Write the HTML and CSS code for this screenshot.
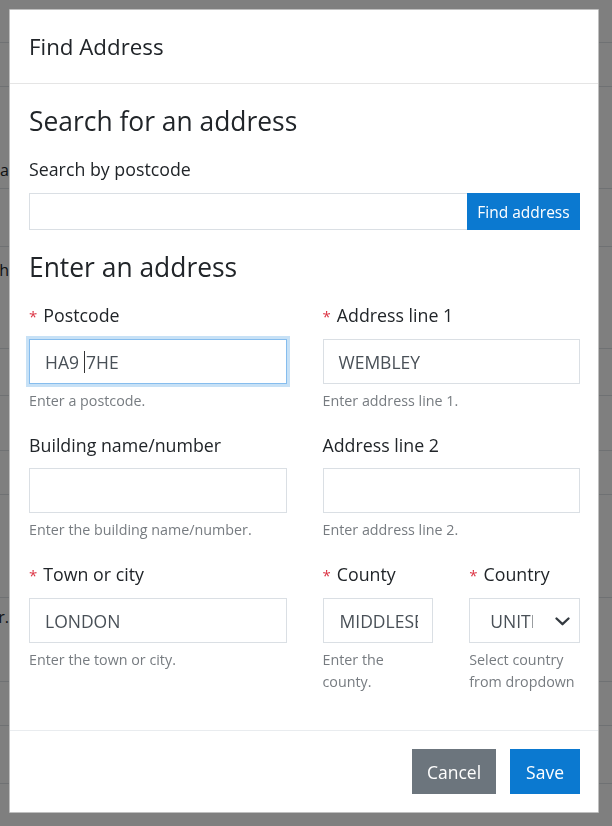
FILE: index.html
```html
<!DOCTYPE html>
<html lang="en">
<head>
<meta charset="utf-8">
<title>Find Address</title>
<link rel="stylesheet" href="styles.css">
</head>
<body>
<div class="page">
  <div class="bg-row r1"><span class="bg-cell"></span></div>
  <div class="bg-row r2"><span class="bg-cell"></span></div>
  <div class="bg-row r3"><span class="bg-cell t3"><span>Surna</span></span></div>
  <div class="bg-row r4"><span class="bg-cell"></span></div>
  <div class="bg-row r5"><span class="bg-cell t5"><span>Month</span></span></div>
  <div class="bg-row r6"><span class="bg-cell"></span></div>
  <div class="bg-row r7"><span class="bg-cell"></span></div>
  <div class="bg-row r8"><span class="bg-cell"></span></div>
  <div class="bg-row r9"><span class="bg-cell"></span></div>
  <div class="bg-row r10"><span class="bg-cell t10"><span>Other.</span></span></div>
  <div class="bg-row r11"><span class="bg-cell"></span></div>
  <div class="bg-row r12"><span class="bg-cell"></span></div>
</div>
<div class="backdrop"></div>
<div class="modal">
  <div class="modal-header">
    <h1 class="modal-title">Find Address</h1>
  </div>
  <div class="modal-body">
    <h2 class="section-title">Search for an address</h2>
    <div class="label search-label">Search by postcode</div>
    <div class="input-group">
      <div class="input input-search"></div>
      <button class="btn btn-primary btn-find" type="button">Find address</button>
    </div>
    <h2 class="section-title second">Enter an address</h2>
    <div class="grid">
      <div class="field span2">
        <div class="label"><span class="req">*</span>Postcode</div>
        <div class="input focused"><span class="value">HA9<span class="caret"></span>7HE</span></div>
        <div class="help">Enter a postcode.</div>
      </div>
      <div class="field span2">
        <div class="label"><span class="req">*</span>Address line 1</div>
        <div class="input"><span class="value">WEMBLEY</span></div>
        <div class="help">Enter address line 1.</div>
      </div>
      <div class="field span2">
        <div class="label">Building name/number</div>
        <div class="input"></div>
        <div class="help">Enter the building name/number.</div>
      </div>
      <div class="field span2">
        <div class="label">Address line 2</div>
        <div class="input"></div>
        <div class="help">Enter address line 2.</div>
      </div>
      <div class="field span2">
        <div class="label"><span class="req">*</span>Town or city</div>
        <div class="input"><span class="value">LONDON</span></div>
        <div class="help">Enter the town or city.</div>
      </div>
      <div class="field">
        <div class="label"><span class="req">*</span>County</div>
        <div class="input input-clip"><span class="clip county-text">MIDDLESEX</span></div>
        <div class="help">Enter the county.</div>
      </div>
      <div class="field">
        <div class="label"><span class="req">*</span>Country</div>
        <div class="input select">
          <span class="clip country-text">UNITED KINGDOM</span>
          <svg class="chevron" width="15" height="9" viewBox="0 0 15 9" aria-hidden="true">
            <polyline points="1.5,1.5 7.5,7.2 13.5,1.5" fill="none" stroke="#343a40" stroke-width="2.3" stroke-linecap="round" stroke-linejoin="round"/>
          </svg>
        </div>
        <div class="help">Select country from dropdown</div>
      </div>
    </div>
  </div>
  <div class="modal-footer">
    <button class="btn btn-secondary" type="button">Cancel</button>
    <button class="btn btn-primary btn-save" type="button">Save</button>
  </div>
</div>
</body>
</html>
```

FILE: styles.css
```css
* {
  box-sizing: border-box;
}

html, body {
  margin: 0;
  padding: 0;
}

body {
  width: 612px;
  height: 826px;
  overflow: hidden;
  background: #ffffff;
  font-family: "Open Sans", "Noto Sans", "Liberation Sans", sans-serif;
  color: #212529;
}

/* background page behind the dialog */
.page {
  display: flex;
  flex-direction: column;
}

.bg-row {
  border-bottom: 1px solid #dee2e6;
  display: flex;
  align-items: flex-start;
}

.r1 { height: 43px; }
.r2 { height: 44px; }
.r3 { height: 102px; }
.r4 { height: 58px; }
.r5 { height: 102px; }
.r6 { height: 47px; }
.r7 { height: 55px; }
.r8 { height: 44px; }
.r9 { height: 103px; }
.r10 { height: 84px; }
.r11 { height: 44px; }
.r12 { height: 58px; }

.bg-cell {
  width: 9px;
  display: flex;
  justify-content: flex-end;
  overflow: hidden;
  white-space: nowrap;
  font-size: 16px;
  line-height: 22px;
  color: #212529;
}

.t3 { margin-top: 72px; }
.t5 { margin-top: 12px; }
.t10 { margin-top: 8px; }

.backdrop {
  position: fixed;
  inset: 0;
  background: rgba(0, 0, 0, 0.5);
}

/* dialog */
.modal {
  position: fixed;
  left: 9px;
  top: 9px;
  width: 590px;
  background: #ffffff;
  border: 1px solid rgba(0, 0, 0, 0.25);
  border-radius: 1px;
  display: flex;
  flex-direction: column;
}

.modal-header {
  height: 74px;
  padding: 0 19px;
  display: flex;
  align-items: center;
  border-bottom: 1px solid #e5e5e5;
}

.modal-title {
  margin: 0;
  font-size: 22.3px;
  font-weight: 400;
  color: #212529;
  line-height: 1.3;
  padding-bottom: 1px;
}

.modal-body {
  padding: 22px 18px 16px 19px;
}

.section-title {
  margin: 0;
  font-size: 26.4px;
  font-weight: 400;
  line-height: 31px;
  color: #212529;
}

.section-title.second {
  margin-top: 22px;
}

.label {
  font-size: 17.8px;
  line-height: 25px;
  color: #212529;
}

.search-label {
  margin-top: 20px;
}

.req {
  color: #dc3545;
  font-size: 15px;
  margin-right: 6px;
}

.input-group {
  margin-top: 11px;
  display: flex;
  height: 37px;
}

.input {
  height: 45px;
  border: 1px solid #dadfe4;
  background: #ffffff;
  padding: 0 15px;
  display: flex;
  align-items: center;
  font-size: 17.5px;
  color: #495057;
  white-space: nowrap;
}

.value {
  white-space: pre;
}

.input-search {
  flex: 1;
  height: 37px;
  border-right: none;
}

.focused {
  border-color: #86bdee;
  box-shadow: 0 0 0 3px rgba(0, 120, 212, 0.22);
}

.caret {
  display: inline-block;
  width: 1px;
  height: 22px;
  background: #333333;
  vertical-align: middle;
  margin: -3px 1px 0 5px;
}

.btn {
  border: none;
  border-radius: 0;
  font-family: "Open Sans", "Noto Sans", "Liberation Sans", sans-serif;
  color: #ffffff;
  cursor: pointer;
  padding: 0 15px;
  height: 45px;
  font-size: 17.5px;
}

.btn-primary {
  background: #0b79d0;
}

.btn-secondary {
  background: #6c757d;
}

.btn-save {
  padding: 0 16px;
}

.btn-find {
  height: 37px;
  width: 113px;
  padding: 0;
  font-size: 15.5px;
}

.grid {
  margin-top: 20px;
  display: grid;
  grid-template-columns: repeat(4, 1fr);
  column-gap: 36px;
}

.field {
  margin-bottom: 21px;
  min-width: 0;
}

.span2 {
  grid-column: span 2;
}

.field .input {
  margin-top: 10px;
}

.help {
  margin-top: 6px;
  font-size: 14.3px;
  line-height: 22px;
  color: #777c81;
}

.clip {
  display: block;
  overflow: hidden;
  white-space: nowrap;
}

.input-clip {
  padding: 0 3px 0 16px;
}

.county-text {
  width: 78px;
}

.select {
  padding: 0 9px 0 20px;
  justify-content: space-between;
}

.country-text {
  width: 43px;
}

.chevron {
  display: block;
  margin-top: 1px;
}

.modal-footer {
  border-top: 1px solid #e9ecef;
  padding: 18px 18px 18px 19px;
  display: flex;
  justify-content: flex-end;
  gap: 14px;
}
```
